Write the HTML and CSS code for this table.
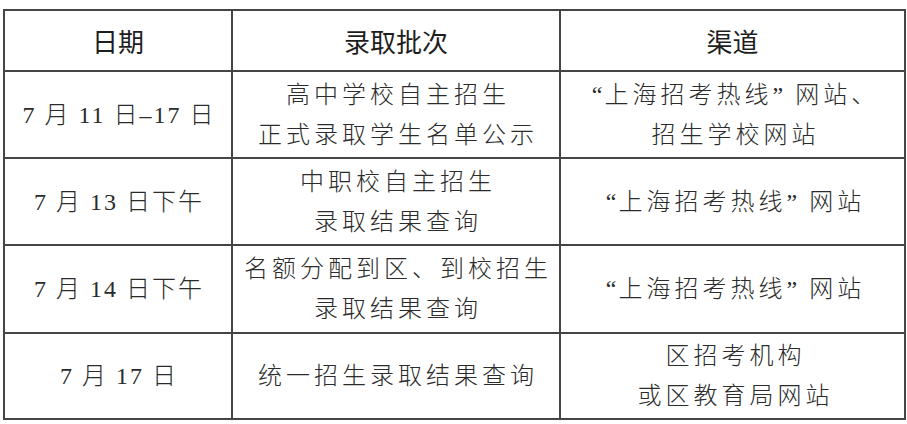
FILE: index.html
```html
<!DOCTYPE html>
<html lang="zh-CN">
<head>
<meta charset="utf-8">
<link rel="stylesheet" href="styles.css">
</head>
<body>
<table class="schedule">
  <colgroup>
    <col class="c-date">
    <col class="c-batch">
    <col class="c-channel">
  </colgroup>
  <thead>
    <tr class="head-row">
      <th>日期</th>
      <th>录取批次</th>
      <th>渠道</th>
    </tr>
  </thead>
  <tbody>
    <tr class="r1">
      <td class="date">7 月 11 日–17 日</td>
      <td>高中学校自主招生<br>正式录取学生名单公示</td>
      <td class="channel"><span class="q">“</span>上海招考热线<span class="q">”</span> 网站、<br>招生学校网站</td>
    </tr>
    <tr class="r2">
      <td class="date">7 月 13 日下午</td>
      <td>中职校自主招生<br>录取结果查询</td>
      <td class="channel"><span class="q">“</span>上海招考热线<span class="q">”</span> 网站</td>
    </tr>
    <tr class="r3">
      <td class="date">7 月 14 日下午</td>
      <td>名额分配到区、到校招生<br>录取结果查询</td>
      <td class="channel"><span class="q">“</span>上海招考热线<span class="q">”</span> 网站</td>
    </tr>
    <tr class="r4">
      <td class="date">7 月 17 日</td>
      <td>统一招生录取结果查询</td>
      <td class="channel">区招考机构<br>或区教育局网站</td>
    </tr>
  </tbody>
</table>
</body>
</html>
```

FILE: styles.css
```css
html, body {
  margin: 0;
  padding: 0;
  background: #ffffff;
}

body {
  padding: 9px 0 0 3px;
}

.schedule {
  width: 901px;
  border-collapse: collapse;
  table-layout: fixed;
  border: 2px solid #454545;
}

.c-date { width: 228px; }
.c-batch { width: 328px; }
.c-channel { width: 345px; }

.schedule th,
.schedule td {
  border: 2px solid #454545;
  text-align: center;
  vertical-align: middle;
  padding: 0;
}

.schedule th {
  font-family: "Noto Sans CJK SC", sans-serif;
  font-size: 26px;
  font-weight: 400;
  color: #1e1e1e;
  height: 59px;
  line-height: 30px;
}

.schedule td {
  font-family: "Liberation Serif", "Noto Sans CJK SC", serif;
  font-size: 24px;
  font-weight: 300;
  color: #2b2b2b;
  letter-spacing: 4px;
  line-height: 40px;
  padding-left: 4px;
}

.schedule td.date {
  letter-spacing: 2px;
  padding-left: 2px;
}

.schedule td.channel {
  padding-left: 6px;
}

.q {
  letter-spacing: 2px;
}

.r1 td { height: 85px; }
.r2 td { height: 85px; }
.r3 td { height: 86px; }
.r4 td { height: 84px; }
```
